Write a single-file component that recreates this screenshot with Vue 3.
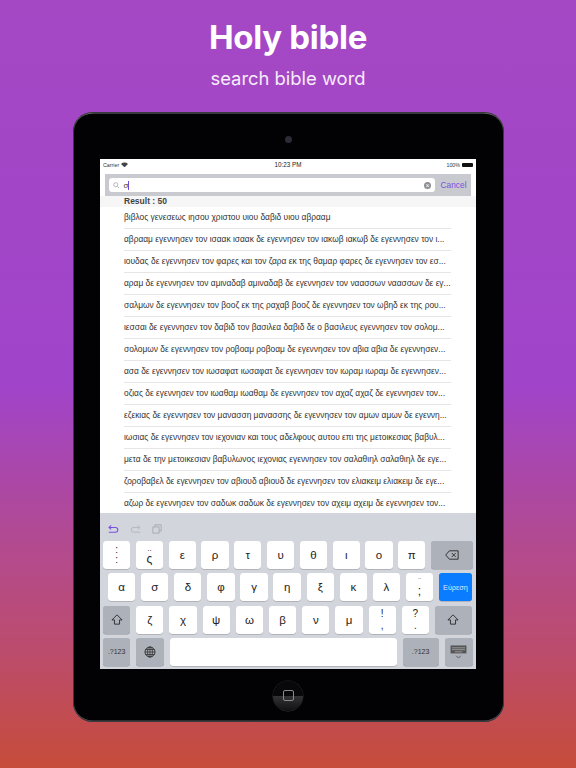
<script setup>
const rows = [
  'βιβλος γενεσεως ιησου χριστου υιου δαβιδ υιου αβρααμ',
  'αβρααμ εγεννησεν τον ισαακ ισαακ δε εγεννησεν τον ιακωβ ιακωβ δε εγεννησεν τον ι...',
  'ιουδας δε εγεννησεν τον φαρες και τον ζαρα εκ της θαμαρ φαρες δε εγεννησεν τον εσ...',
  'αραμ δε εγεννησεν τον αμιναδαβ αμιναδαβ δε εγεννησεν τον ναασσων ναασσων δε εγ...',
  'σαλμων δε εγεννησεν τον βοοζ εκ της ραχαβ βοοζ δε εγεννησεν τον ωβηδ εκ της ρου...',
  'ιεσσαι δε εγεννησεν τον δαβιδ τον βασιλεα δαβιδ δε ο βασιλευς εγεννησεν τον σολομ...',
  'σολομων δε εγεννησεν τον ροβοαμ ροβοαμ δε εγεννησεν τον αβια αβια δε εγεννησεν...',
  'ασα δε εγεννησεν τον ιωσαφατ ιωσαφατ δε εγεννησεν τον ιωραμ ιωραμ δε εγεννησεν...',
  'οζιας δε εγεννησεν τον ιωαθαμ ιωαθαμ δε εγεννησεν τον αχαζ αχαζ δε εγεννησεν τον...',
  'εζεκιας δε εγεννησεν τον μανασση μανασσης δε εγεννησεν τον αμων αμων δε εγεννη...',
  'ιωσιας δε εγεννησεν τον ιεχονιαν και τους αδελφους αυτου επι της μετοικεσιας βαβυλ...',
  'μετα δε την μετοικεσιαν βαβυλωνος ιεχονιας εγεννησεν τον σαλαθιηλ σαλαθιηλ δε εγε...',
  'ζοροβαβελ δε εγεννησεν τον αβιουδ αβιουδ δε εγεννησεν τον ελιακειμ ελιακειμ δε εγε...',
  'αζωρ δε εγεννησεν τον σαδωκ σαδωκ δε εγεννησεν τον αχειμ αχειμ δε εγεννησεν τον...'
]
const row1 = ['ε', 'ρ', 'τ', 'υ', 'θ', 'ι', 'ο', 'π']
const row2 = ['α', 'σ', 'δ', 'φ', 'γ', 'η', 'ξ', 'κ', 'λ']
const row3 = ['ζ', 'χ', 'ψ', 'ω', 'β', 'ν', 'μ']
</script>

<template>
  <div class="page">
    <header class="head">
      <h1 class="title">Holy bible</h1>
      <p class="sub">search bible word</p>
    </header>

    <div class="device">
      <div class="camera-zone"><span class="camera"></span></div>
      <div class="screen">
        <div class="status">
          <span class="st-left">
            Carrier
            <svg class="wifi" viewBox="0 0 12 9" width="7" height="5.5">
              <path d="M6 9 0 3a8.5 8.5 0 0 1 12 0z" fill="#444" />
            </svg>
          </span>
          <span class="st-mid">10:23 PM</span>
          <span class="st-right">
            100%
            <span class="battery"></span>
          </span>
        </div>

        <div class="searchbar">
          <div class="field">
            <svg class="mag" viewBox="0 0 12 12" width="6.5" height="6.5">
              <circle cx="5" cy="5" r="3.8" fill="none" stroke="#8e8e93" stroke-width="1.1" />
              <path d="M8 8l3.4 3.4" stroke="#8e8e93" stroke-width="1.1" />
            </svg>
            <span class="query">σ</span><span class="caret"></span>
            <span class="clear">×</span>
          </div>
          <span class="cancel">Cancel</span>
        </div>

        <div class="result">Result : 50</div>
        <ul class="list">
          <li v-for="(r, i) in rows" :key="i" class="row">{{ r }}</li>
        </ul>

        <div class="kb">
          <div class="tools">
            <svg viewBox="0 0 14 12" width="11" height="10">
              <path d="M1 10h8.5a3 3 0 0 0 0-6H1.5M4 1.5 1.3 4 4 6.5" fill="none" stroke="#7c4fe0" stroke-width="1.3" />
            </svg>
            <svg viewBox="0 0 14 12" width="11" height="10">
              <path d="M13 10H4.5a3 3 0 0 1 0-6h8M10 1.5 12.7 4 10 6.5" fill="none" stroke="#b4b6bc" stroke-width="1.2" />
            </svg>
            <svg viewBox="0 0 12 12" width="10" height="10">
              <path d="M1 3.5h7.5V11H1zM3.5 3.5V1H11v7.5H8.5" fill="none" stroke="#a4a6ac" stroke-width="1" />
            </svg>
          </div>

          <div class="kr r1">
            <span class="key stack"><span class="dots">:</span><span class="dots">:</span></span>
            <span class="key stack"><span class="tiny">..</span><span class="low">ς</span></span>
            <span v-for="k in row1" :key="k" class="key">{{ k }}</span>
            <span class="key dark del">
              <svg viewBox="0 0 16 11" width="14" height="10">
                <path d="M5 .7h10v9.6H5L.8 5.5z" fill="none" stroke="#222" stroke-width="1" />
                <path d="M7.8 3.3l4.4 4.4M12.2 3.3 7.8 7.7" stroke="#222" stroke-width="1" />
              </svg>
            </span>
          </div>

          <div class="kr r2">
            <span v-for="k in row2" :key="k" class="key">{{ k }}</span>
            <span class="key stack"><span class="tiny">¨</span><span class="low">;</span></span>
            <span class="key go">Εύρεση</span>
          </div>

          <div class="kr r3">
            <span class="key dark">
              <svg viewBox="0 0 14 13" width="12" height="11">
                <path d="M7 1 1 7h3v5h6V7h3z" fill="none" stroke="#222" stroke-width="1" />
              </svg>
            </span>
            <span v-for="k in row3" :key="k" class="key">{{ k }}</span>
            <span class="key stack"><span class="half">!</span><span class="half">,</span></span>
            <span class="key stack"><span class="half">?</span><span class="half">.</span></span>
            <span class="key dark shift-r">
              <svg viewBox="0 0 14 13" width="12" height="11">
                <path d="M7 1 1 7h3v5h6V7h3z" fill="none" stroke="#222" stroke-width="1" />
              </svg>
            </span>
          </div>

          <div class="kr r4">
            <span class="key dark num">.?123</span>
            <span class="key dark">
              <svg viewBox="0 0 12 12" width="12" height="12">
                <circle cx="6" cy="6" r="5" fill="none" stroke="#333" stroke-width="1" />
                <ellipse cx="6" cy="6" rx="2.4" ry="5" fill="none" stroke="#333" stroke-width=".8" />
                <path d="M6 1v10M1 6h10M1.8 3.5h8.4M1.8 8.5h8.4" stroke="#333" stroke-width=".8" />
              </svg>
            </span>
            <span class="key space"></span>
            <span class="key dark num wide">.?123</span>
            <span class="key dark hide">
              <svg viewBox="0 0 18 15" width="17" height="14">
                <rect x=".5" y=".5" width="17" height="8.5" fill="#555" />
                <path d="M2 3h14M2 5h14M5 7.3h8" stroke="#bbb" stroke-width=".7" />
                <path d="M6.5 11.5 9 14l2.5-2.5" fill="none" stroke="#444" stroke-width=".8" />
              </svg>
            </span>
          </div>
        </div>
      </div>
      <div class="home-zone">
        <span class="home"><span class="home-sq"></span></span>
      </div>
    </div>
  </div>
</template>

<style>
html, body { margin: 0; padding: 0; }
</style>

<style scoped>
.page {
  width: 576px;
  height: 768px;
  overflow: hidden;
  box-sizing: border-box;
  display: flex;
  flex-direction: column;
  align-items: center;
  font-family: "Liberation Sans", Arial, sans-serif;
  background: linear-gradient(180deg, #a548c4 0%, #a044ca 50%, #b24a92 70%, #bc4c6c 85%, #c64c3a 100%);
}
.head { height: 112px; text-align: center; color: #fff; flex: none; font-family: Inter, "Liberation Sans", sans-serif; }
.title { margin: 18px 0 0; font-size: 33px; line-height: 39px; font-weight: 700; letter-spacing: -0.3px; }
.sub { margin: 10px 0 0; font-size: 18.4px; line-height: 23px; font-weight: 400; color: #f6ecfb; }

.device {
  flex: none;
  width: 431px;
  height: 610px;
  box-sizing: border-box;
  background: #020204;
  border-radius: 20px;
  box-shadow: inset 0 0 0 1px #3a3a3e, inset 0 1.5px 0 #77777c, inset 0 -1.5px 0 #55555a;
  display: flex;
  flex-direction: column;
  align-items: center;
}
.camera-zone { height: 47px; box-sizing: border-box; padding-top: 8px; flex: none; display: flex; align-items: center; justify-content: center; }
.camera { width: 7px; height: 7px; border-radius: 50%; background: #2c2c36; }
.screen {
  width: 376px;
  height: 510px;
  flex: none;
  background: #fff;
  display: flex;
  flex-direction: column;
  overflow: hidden;
}
.status {
  height: 11px;
  flex: none;
  margin-bottom: 4px;
  display: flex;
  align-items: center;
  justify-content: space-between;
  padding: 0 3px;
  font-size: 5.3px;
  color: #333;
  position: relative;
}
.st-left, .st-right { display: flex; align-items: center; gap: 2px; }
.st-mid { position: absolute; left: 0; right: 0; text-align: center; font-size: 6.3px; color: #222; }
.battery { width: 11px; height: 4px; background: #111; border-radius: 1px; }
.searchbar {
  margin: 0 5px;
  height: 22px;
  flex: none;
  background: #c9c9d0;
  display: flex;
  align-items: center;
  padding: 0 4px;
  gap: 5px;
}
.field {
  flex: 1;
  height: 14px;
  background: #fff;
  border-radius: 3px;
  display: flex;
  align-items: center;
  padding: 0 4px 0 4px;
  font-size: 8px;
  color: #444;
}
.query { margin-left: 4px; }
.caret { width: 1px; height: 9px; background: #6a4be0; }
.clear {
  margin-left: auto;
  width: 7px;
  height: 7px;
  border-radius: 50%;
  background: #8e8e93;
  color: #fff;
  font-size: 7px;
  line-height: 7px;
  text-align: center;
}
.cancel { font-size: 8.4px; color: #7c52e0; width: 27px; text-align: center; }
.result {
  height: 11px;
  flex: none;
  background: #f6f6f7;
  padding-left: 24px;
  font-size: 8.5px;
  font-weight: 700;
  line-height: 11px;
  color: #444;
}
.list { list-style: none; margin: 0; padding: 0 0 0 24px; flex: 1; overflow: hidden; }
.row {
  height: 22px;
  width: 327px;
  box-sizing: border-box;
  line-height: 20px;
  font-size: 8.4px;
  color: #333;
  white-space: nowrap;
  border-bottom: 1px solid #e6e6e8;
}
.row:last-child { border-bottom: none; }

.kb {
  height: 156px;
  flex: none;
  background: #d2d5db;
  box-sizing: border-box;
  padding: 0 3px;
  display: flex;
  flex-direction: column;
}
.tools { height: 28px; box-sizing: border-box; padding: 3px 4px 0 5px; flex: none; display: flex; align-items: center; gap: 11px; }
.kr { display: flex; height: 28px; flex: none; margin-bottom: 4.3px; }
.r1 { gap: 5.5px; }
.r2 { gap: 5.8px; padding-left: 5px; }
.r3 { gap: 5.9px; }
.r4 { gap: 6px; }
.key {
  width: 27.3px;
  height: 28px;
  flex: none;
  background: #fff;
  border-radius: 3px;
  box-shadow: 0 0.5px 0 #8f9197;
  display: flex;
  align-items: center;
  justify-content: center;
  font-size: 11.5px;
  color: #222;
  text-align: center;
}
.stack { flex-direction: column; }
.dots { font-size: 10px; line-height: 10px; }
.tiny { font-size: 8px; line-height: 9px; }
.low { font-size: 12px; line-height: 13px; }
.half { font-size: 10px; line-height: 12px; }
.dark { background: #adb1b9; }
.del { width: 42px; margin-left: 0.5px; }
.go { width: 33px; background: #0a7cff; color: #d6e8ff; font-size: 7.3px; }
.shift-r { width: 37px; }
.num { font-size: 7px; color: #333; }
.space { width: 227px; }
.wide { width: 36px; }
.hide { width: 28px; }

.home-zone { flex: 1; display: flex; align-items: center; justify-content: center; }
.home {
  width: 30px;
  height: 30px;
  border-radius: 50%;
  background: linear-gradient(180deg, #08080a 0 50%, #333337 50%, #111 100%);
  box-shadow: 0 0 0 .5px #2a2a2e;
  display: flex;
  align-items: center;
  justify-content: center;
}
.home-sq { width: 9px; height: 9px; border: 1px solid #8a8a90; border-radius: 2px; }
</style>
